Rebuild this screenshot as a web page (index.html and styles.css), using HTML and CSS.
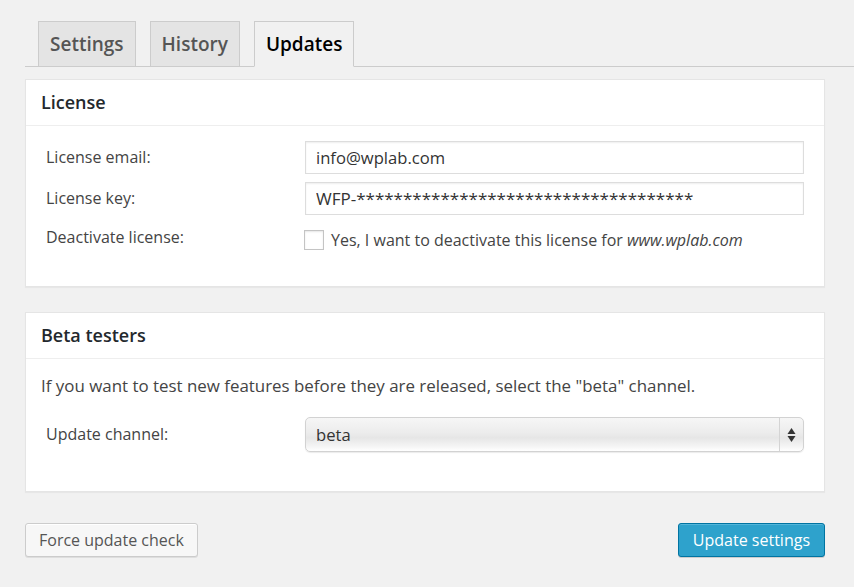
FILE: index.html
```html
<!DOCTYPE html>
<html lang="en">
<head>
  <meta charset="UTF-8">
  <title>Updates</title>
  <link rel="stylesheet" href="styles.css">
</head>
<body>
  <div class="wrap">
    <nav class="nav-tabs">
      <a class="nav-tab" href="#">Settings</a>
      <a class="nav-tab" href="#">History</a>
      <a class="nav-tab nav-tab--active" href="#">Updates</a>
    </nav>

    <div class="postbox postbox--license">
      <h3 class="postbox-title">License</h3>
      <div class="postbox-inside">
        <div class="form-rows">
          <label class="form-label" for="lic-email">License email:</label>
          <input class="text-input" id="lic-email" type="text" value="info@wplab.com">

          <label class="form-label" for="lic-key">License key:</label>
          <input class="text-input text-input--key" id="lic-key" type="text" value="WFP-************************************">

          <label class="form-label" for="lic-off">Deactivate license:</label>
          <label class="check-label">
            <input class="check-input" id="lic-off" type="checkbox">
            <span>Yes, I want to deactivate this license for <em>www.wplab.com</em></span>
          </label>
        </div>
      </div>
    </div>

    <div class="postbox postbox--beta">
      <h3 class="postbox-title">Beta testers</h3>
      <div class="postbox-inside">
        <p class="postbox-text">If you want to test new features before they are released, select the "beta" channel.</p>
        <div class="form-rows">
          <label class="form-label" for="channel">Update channel:</label>
          <div class="select-wrap">
            <select class="select-input" id="channel">
              <option>beta</option>
              <option>stable</option>
            </select>
            <span class="select-arrows">
              <svg width="9" height="16" viewBox="0 0 9 16"><path d="M4.5 1 L8.5 7 H0.5 Z" fill="#333"/><path d="M4.5 15 L8.5 9 H0.5 Z" fill="#333"/></svg>
            </span>
          </div>
        </div>
      </div>
    </div>

    <div class="actions">
      <button type="button" class="button">Force update check</button>
      <button type="button" class="button button--primary">Update settings</button>
    </div>
  </div>
</body>
</html>
```

FILE: styles.css
```css
html,body{margin: 0; padding: 0; background-color: #f1f1f1; height: 100%; overflow: hidden;}
*{box-sizing: border-box;}
body{font-family: "Open Sans", "Liberation Sans", sans-serif; color: #444; font-size: 16px;}

.wrap{padding: 21px 0 0 25px;}

.nav-tabs{
  display: flex;
  gap: 14px;
  padding-left: 13px;
  border-bottom: 1px solid #ccc;
}
.nav-tab{
  display: block;
  padding: 10px 11px;
  line-height: 24px;
  font-size: 19px;
  font-weight: 600;
  color: #555;
  text-decoration: none;
  background-color: #e4e4e4;
  border: 1px solid #ccc;
  border-bottom: 0;
}
.nav-tab--active{
  color: #000;
  background-color: #f1f1f1;
  border-bottom: 1px solid #f1f1f1;
  margin-bottom: -1px;
}

.postbox{
  width: 800px;
  background-color: #fff;
  border: 1px solid #e5e5e5;
  box-shadow: 0 1px 1px rgba(0,0,0,0.04);
}
.postbox--license{margin-top: 12px;}
.postbox--beta{margin-top: 25px;}

.postbox-title{
  margin: 0;
  padding: 10px 15px 11px 15px;
  line-height: 24px;
  font-size: 18px;
  font-weight: 600;
  color: #23282d;
  border-bottom: 1px solid #eee;
}
.postbox--license .postbox-inside{padding: 15px 20px 33px 15px;}
.postbox--beta .postbox-inside{padding: 15px 20px 39px 15px;}

.postbox-text{margin: 0 0 19px; line-height: 24px; font-size: 16.9px;}

.form-rows{
  display: grid;
  grid-template-columns: 264px 1fr;
  row-gap: 8px;
  align-items: center;
}
.form-label{padding-left: 5px; line-height: 24px; margin-top: -2px;}

.text-input{
  width: 100%;
  height: 33px;
  padding: 0 10px;
  font: inherit;
  font-size: 16.6px;
  color: #333;
  border: 1px solid #ddd;
  background-color: #fff;
  box-shadow: inset 0 1px 2px rgba(0,0,0,0.07);
  outline: none;
}
.text-input--key{font-size: 17px;}

.check-label{display: flex; align-items: center; gap: 7px; height: 27px; margin-top: 3px;}
.check-input{
  appearance: none;
  -webkit-appearance: none;
  margin: 0 0 0 -1px;
  width: 20px;
  height: 20px;
  border: 1px solid #c4c4c4;
  background-color: #fff;
  box-shadow: inset 0 1px 2px rgba(0,0,0,0.1);
}
.check-label em{font-style: italic;}

.select-wrap{position: relative; height: 35px;}
.select-input{
  appearance: none;
  -webkit-appearance: none;
  width: 100%;
  height: 35px;
  padding: 0 30px 0 10px;
  font: inherit;
  font-size: 16.6px;
  color: #333;
  border: 1px solid #d2d2d2;
  border-radius: 5px;
  background: linear-gradient(#f6f6f6, #ececec 45%, #e6e6e6 60%, #f4f4f4 85%, #fff);
  box-shadow: 0 1px 1px rgba(0,0,0,0.08);
  outline: none;
}
.select-arrows{
  position: absolute;
  top: 1px;
  right: 1px;
  bottom: 1px;
  width: 24px;
  display: flex;
  align-items: center;
  justify-content: center;
  border-left: 1px solid #d4d4d4;
  pointer-events: none;
}

.actions{
  width: 800px;
  margin-top: 31px;
  display: flex;
  justify-content: space-between;
}
.button{
  height: 34px;
  padding: 0 13px;
  font: inherit;
  line-height: 32px;
  color: #555;
  background-color: #f7f7f7;
  border: 1px solid #ccc;
  border-radius: 3px;
  box-shadow: inset 0 1px 0 #fff, 0 1px 0 rgba(0,0,0,0.08);
  cursor: pointer;
}
.button--primary{
  padding: 0 14px;
  color: #fff;
  background-color: #2ea2cc;
  border-color: #0074a2;
  box-shadow: inset 0 1px 0 rgba(120,200,230,0.5), 0 1px 0 rgba(0,0,0,0.15);
}
```
